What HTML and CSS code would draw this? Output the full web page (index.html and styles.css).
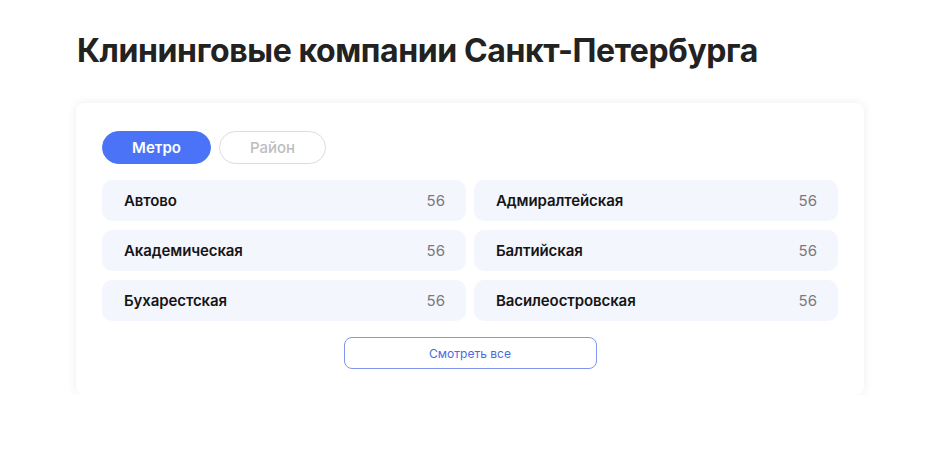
FILE: index.html
```html
<!DOCTYPE html>
<html lang="ru">
<head>
<meta charset="utf-8">
<link rel="stylesheet" href="styles.css">
</head>
<body>
<main class="page">
  <h1 class="title">Клининговые компании Санкт-Петербурга</h1>
  <section class="card">
    <div class="tabs">
      <button class="tab tab-active">Метро</button>
      <button class="tab">Район</button>
    </div>
    <div class="grid">
      <a class="item"><span class="name">Автово</span><span class="count">56</span></a>
      <a class="item"><span class="name">Адмиралтейская</span><span class="count">56</span></a>
      <a class="item"><span class="name">Академическая</span><span class="count">56</span></a>
      <a class="item"><span class="name">Балтийская</span><span class="count">56</span></a>
      <a class="item"><span class="name">Бухарестская</span><span class="count">56</span></a>
      <a class="item"><span class="name">Василеостровская</span><span class="count">56</span></a>
    </div>
    <div class="more-wrap">
      <button class="more">Смотреть все</button>
    </div>
  </section>
</main>
</body>
</html>
```

FILE: styles.css
```css
* { box-sizing: border-box; }
html, body { margin: 0; padding: 0; background: #fff; }
body { font-family: "Inter", "Noto Sans", sans-serif; color: #1c1c1c; }
.page { width: 788px; margin-left: 76px; padding-top: 31px; }
.title {
  margin: 0 0 32px 1px;
  font-size: 32px;
  line-height: 40px;
  font-weight: 700;
  letter-spacing: -0.4px;
  color: #222;
}
.card {
  background: #fff;
  border-radius: 8px;
  box-shadow: 0 0 10px rgba(40, 50, 100, 0.09);
  padding: 28px 26px 26px;
}
.tabs { display: flex; gap: 8px; margin-bottom: 16px; }
.tab {
  height: 33px;
  width: 107px;
  border-radius: 17px;
  border: 1px solid #dcdcdc;
  background: #fff;
  color: #bdbdbd;
  font-family: inherit;
  font-size: 15px;
  font-weight: 500;
  padding: 0;
}
.tab-active {
  width: 109px;
  background: #4b73f7;
  border-color: #4b73f7;
  color: #fff;
  font-weight: 600;
}
.grid {
  display: grid;
  grid-template-columns: 1fr 1fr;
  column-gap: 8px;
  row-gap: 9px;
}
.item {
  display: flex;
  align-items: center;
  justify-content: space-between;
  height: 41px;
  padding: 0 21px 0 22px;
  background: #f4f6fe;
  border-radius: 10px;
  font-size: 15px;
}
.name { font-weight: 600; color: #151515; letter-spacing: -0.1px; }
.count { color: #7a7a7a; font-weight: 400; font-size: 15px; }
.more-wrap { display: flex; justify-content: center; margin-top: 16px; }
.more {
  width: 253px;
  height: 32px;
  border: 1px solid #8196ef;
  border-radius: 8px;
  background: #fff;
  color: #4a6ce0;
  font-family: inherit;
  font-size: 12px;
  font-weight: 400;
}
```
